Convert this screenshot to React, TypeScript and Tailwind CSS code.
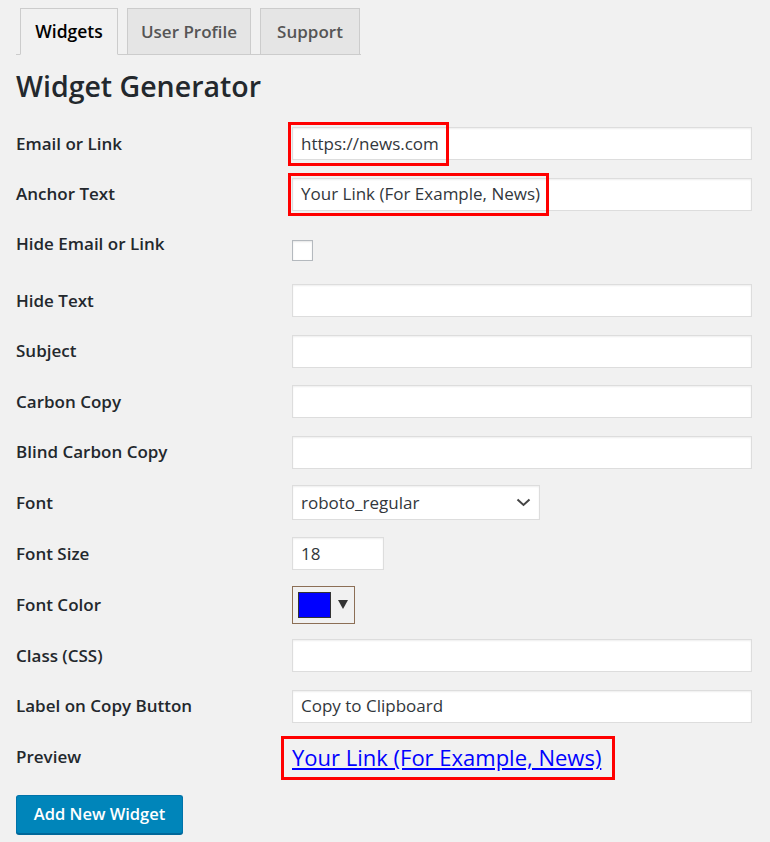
import React from "react";

function Tabs() {
	return (
		<nav className="flex w-[345px] items-end gap-[9px] border-b border-[#ccc] pl-1">
			<div className="-mb-px flex h-[47px] w-[98px] items-center justify-center border border-[#ccc] border-b-[#f1f1f1] bg-[#f1f1f1] text-[17.5px] font-semibold text-black">
				Widgets
			</div>
			<div className="-mb-px flex h-[47px] w-[124px] items-center justify-center border border-[#ccc] bg-[#e5e5e5] text-[17px] font-semibold text-[#555]">
				User Profile
			</div>
			<div className="-mb-px flex h-[47px] w-[100px] items-center justify-center border border-[#ccc] bg-[#e5e5e5] text-[17px] font-semibold text-[#555]">
				Support
			</div>
		</nav>
	);
}

function Label({ children }: { children: React.ReactNode }) {
	return (
		<div className="w-[276px] shrink-0 text-[17px] font-semibold leading-6 text-[#23282d]">
			{children}
		</div>
	);
}

function TextInput({ value = "", w = "w-[460px]" }: { value?: string; w?: string }) {
	return (
		<div
			className={`flex h-[33px] ${w} items-center border border-[#ddd] bg-white px-2 text-[17px] text-[#32373c] shadow-[inset_0_1px_2px_rgba(0,0,0,0.07)]`}
		>
			{value}
		</div>
	);
}

export default function App() {
	return (
		<div className="min-h-[842px] bg-[#f1f1f1] pl-4 pt-2 font-['Open_Sans',sans-serif] text-[#23282d]">
			<Tabs />

			<h1 className="mt-[13px] mb-[14px] h-[36px] text-[28.5px] font-semibold leading-[36px] text-[#23282d]">
				Widget Generator
			</h1>

			<div className="flex flex-col">
				<div className="flex h-[51px] items-center">
					<Label>Email or Link</Label>
					<div className="relative">
						<TextInput value="https://news.com" />
						<div className="pointer-events-none absolute -left-[4px] -top-[5px] h-[44px] w-[161px] border-[3px] border-[#ff0000]" />
					</div>
				</div>

				<div className="flex h-[50px] items-center">
					<Label>Anchor Text</Label>
					<div className="relative">
						<TextInput value="Your Link (For Example, News)" />
						<div className="pointer-events-none absolute -left-[4px] -top-[5px] h-[43px] w-[261px] border-[3px] border-[#ff0000]" />
					</div>
				</div>

				<div className="flex h-[56px] items-start">
					<div className="pt-[13px]">
						<Label>Hide Email or Link</Label>
					</div>
					<div className="pt-[21px]">
						<div className="h-[21px] w-[21px] border border-[#b4b9be] bg-white shadow-[inset_0_1px_2px_rgba(0,0,0,0.1)]" />
					</div>
				</div>

				<div className="flex h-[51px] items-center">
					<Label>Hide Text</Label>
					<TextInput />
				</div>

				<div className="flex h-[50px] items-center">
					<Label>Subject</Label>
					<TextInput />
				</div>

				<div className="flex h-[51px] items-center">
					<Label>Carbon Copy</Label>
					<TextInput />
				</div>

				<div className="flex h-[50px] items-center">
					<Label>Blind Carbon Copy</Label>
					<TextInput />
				</div>

				<div className="flex h-[51px] items-center">
					<Label>Font</Label>
					<div className="flex h-[35px] w-[248px] items-center justify-between border border-[#ddd] bg-white pl-2 pr-[8px] text-[17px] text-[#32373c] shadow-[inset_0_1px_2px_rgba(0,0,0,0.07)]">
						<span>roboto_regular</span>
						<svg width="15" height="9" viewBox="0 0 15 9" fill="none">
							<polyline points="1.5,1.5 7.5,7 13.5,1.5" stroke="#444" strokeWidth="2" />
						</svg>
					</div>
				</div>

				<div className="flex h-[51px] items-center">
					<Label>Font Size</Label>
					<TextInput value="18" w="w-[92px]" />
				</div>

				<div className="flex h-[51px] items-center">
					<Label>Font Color</Label>
					<div className="flex h-[38px] w-[63px] items-center border border-[#8c6f56] bg-[#f1f1f1] pl-[5px]">
						<div className="h-[26px] w-[33px] border border-[#333] bg-[#0000ff]" />
						<svg className="ml-[7px]" width="10" height="9" viewBox="0 0 10 9">
							<polygon points="0,0 10,0 5,9" fill="#333" />
						</svg>
					</div>
				</div>

				<div className="flex h-[51px] items-center">
					<Label>Class (CSS)</Label>
					<TextInput />
				</div>

				<div className="flex h-[50px] items-center">
					<Label>Label on Copy Button</Label>
					<TextInput value="Copy to Clipboard" />
				</div>

				<div className="flex h-[52px] items-center">
					<Label>Preview</Label>
					<div className="relative flex h-[44px] items-center">
						<a className="text-[22px] leading-none text-[#0000ff] underline">
							Your Link (For Example, News)
						</a>
						<div className="pointer-events-none absolute -left-[11px] top-[1px] h-[44px] w-[334px] border-[3px] border-[#ff0000]" />
					</div>
				</div>
			</div>

			<button className="mt-[12px] flex h-[39px] w-[167px] items-center justify-center rounded-[3px] border border-[#0073aa] border-b-[#006799] bg-[#0085ba] text-[16.5px] font-semibold text-white shadow-[0_1px_0_#006799]">
				Add New Widget
			</button>
		</div>
	);
}
